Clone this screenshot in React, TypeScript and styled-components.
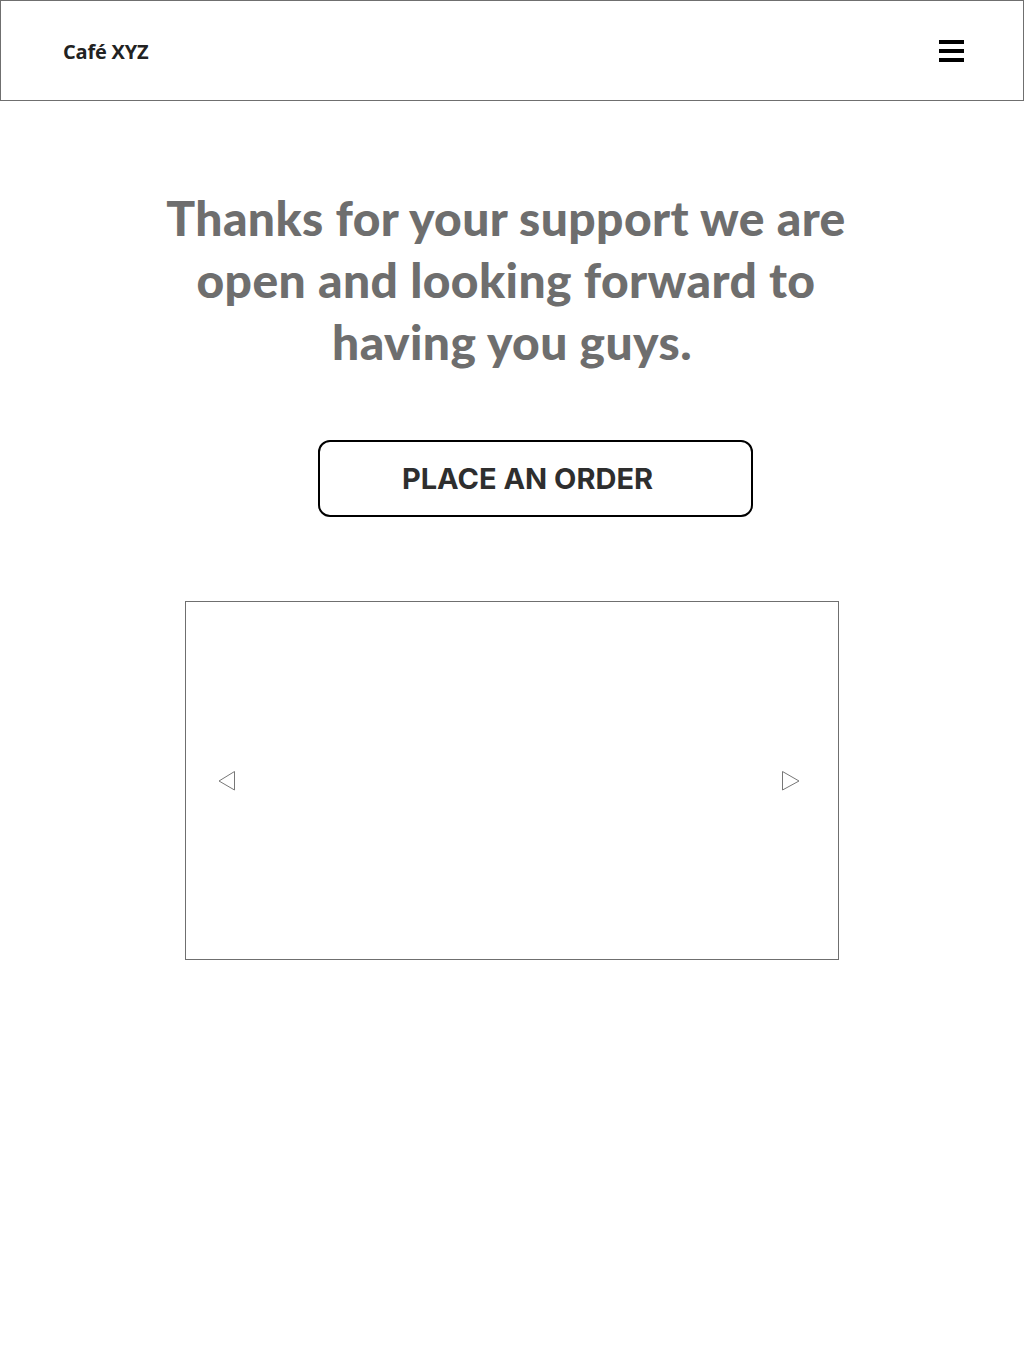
import React from "react";
import styled, { createGlobalStyle } from "styled-components";

const Global = createGlobalStyle`
  html, body { margin: 0; padding: 0; background: #fff; }
  body { font-family: "Open Sans", "Liberation Sans", sans-serif; }
`;

const Page = styled.div`
  width: 1024px;
  min-height: 1366px;
  display: flex;
  flex-direction: column;
  align-items: center;
`;

const Header = styled.header`
  box-sizing: border-box;
  width: 1024px;
  height: 101px;
  border: 1px solid #6f6f6f;
  display: flex;
  align-items: center;
  justify-content: space-between;
  padding: 0 59px 0 62px;
`;

const Logo = styled.div`
  font-family: "Open Sans", sans-serif;
  font-weight: 700;
  font-size: 20px;
  color: #222;
  letter-spacing: -0.2px;
  padding-top: 2px;
`;

const Burger = styled.button`
  width: 25px;
  height: 22px;
  padding: 0;
  border: 0;
  background: none;
  display: flex;
  flex-direction: column;
  justify-content: space-between;
  cursor: pointer;
`;

const Bar = styled.span`
  display: block;
  height: 4px;
  background: #000;
`;

const Heading = styled.h1`
  margin: 86px 0 0;
  font-family: Lato, "Open Sans", sans-serif;
  font-weight: 900;
  font-size: 48px;
  line-height: 62px;
  letter-spacing: 0.4px;
  color: #6e6e6e;
  text-align: center;
`;

const Line = styled.span<{ $shift?: number }>`
  display: block;
  padding-right: ${(p) => p.$shift ?? 0}px;
`;

const OrderButton = styled.button`
  box-sizing: border-box;
  margin: 67px 0 0 47px;
  width: 435px;
  height: 77px;
  border: 2px solid #000;
  border-radius: 12px;
  background: #fff;
  font-family: Inter, sans-serif;
  font-weight: 700;
  font-size: 29px;
  color: #2e2e2e;
  padding: 0 16px 0 0;
  cursor: pointer;
`;

const Carousel = styled.div`
  box-sizing: border-box;
  margin-top: 84px;
  width: 654px;
  height: 359px;
  border: 1px solid #6f6f6f;
  display: flex;
  align-items: center;
  justify-content: space-between;
  padding: 0 37px 0 31px;
`;

const Arrow = styled.svg`
  width: 20px;
  height: 22px;
`;

export default function App() {
  return (
    <>
      <Global />
      <Page>
        <Header>
          <Logo>Café XYZ</Logo>
          <Burger aria-label="menu">
            <Bar />
            <Bar />
            <Bar />
          </Burger>
        </Header>
        <Heading>
          <Line $shift={12}>Thanks for your support we are</Line>
          <Line $shift={12}>open and looking forward to</Line>
          <Line>having you guys.</Line>
        </Heading>
        <OrderButton>PLACE AN ORDER</OrderButton>
        <Carousel>
          <Arrow viewBox="0 0 20 22">
            <polygon points="17.5,1.5 17.5,20 2,11" fill="none" stroke="#777" strokeWidth="1" />
          </Arrow>
          <Arrow viewBox="0 0 20 22">
            <polygon points="1.5,1.5 1.5,20 18,11" fill="none" stroke="#777" strokeWidth="1" />
          </Arrow>
        </Carousel>
      </Page>
    </>
  );
}
